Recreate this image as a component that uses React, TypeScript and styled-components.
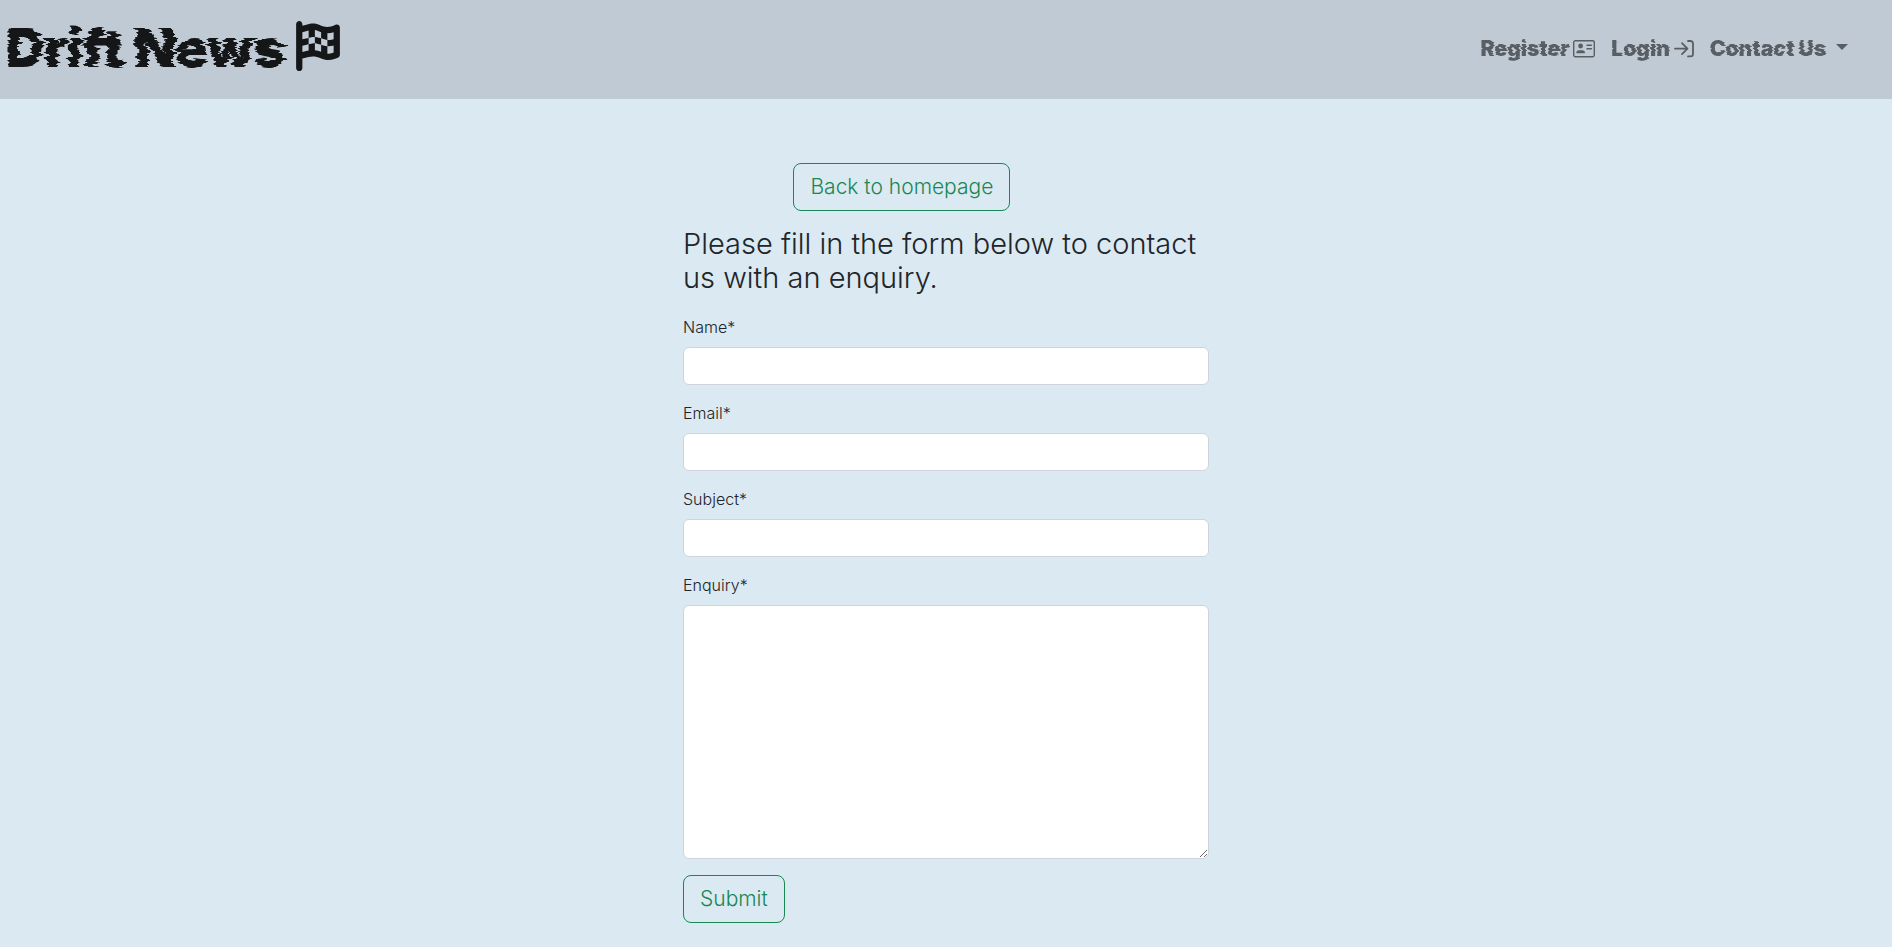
import React from 'react';
import styled, { createGlobalStyle } from 'styled-components';
import { FaFlagCheckered } from 'react-icons/fa6';

const GlobalStyle = createGlobalStyle`
  *, *::before, *::after { box-sizing: border-box; }
  body {
    margin: 0;
    background: #dbe9f2;
    color: #212529;
    font-family: Inter, "Open Sans", sans-serif;
    font-size: 16px;
    font-weight: 300;
    line-height: 24px;
  }
`;

const Header = styled.header`
  display: flex;
  align-items: center;
  justify-content: space-between;
  flex-wrap: wrap;
  min-height: 99px;
  padding: 0 44px 0 6px;
  background: #c0cad4;
`;

const Brand = styled.a`
  display: flex;
  align-items: center;
  gap: 8px;
  padding-bottom: 8px;
  color: #141618;
  font-size: 53px;
  font-weight: 900;
  line-height: 60px;
  text-decoration: none;
`;

const Glitch = styled.span<{ $size: 'large' | 'small' }>`
  padding-top: ${({ $size }) => ($size === 'large' ? '4px' : '0')};
  filter: url(#glitch-${({ $size }) => $size});
`;

const Nav = styled.nav`
  display: flex;
  align-items: center;
  gap: 16px;
  padding-bottom: 2px;
`;

const NavItem = styled.a`
  display: flex;
  align-items: center;
  gap: 4px;
  color: #585e63;
  font-size: 21px;
  font-weight: 900;
  line-height: 30px;
  text-decoration: none;
`;

const NavToggle = styled(NavItem).attrs({ as: 'button' })`
  gap: 10px;
  padding: 0;
  border: 0;
  background: none;
  font-family: inherit;
  cursor: pointer;
`;

const Caret = styled.span`
  margin-bottom: 4px;
  border-top: 6px solid;
  border-right: 6px solid transparent;
  border-left: 6px solid transparent;
`;

const Content = styled.main`
  width: 100%;
  max-width: 550px;
  margin: 0 auto;
  padding: 64px 12px 24px;
`;

const outlineButton = `
  display: inline-block;
  padding: 8px 16px;
  border: 1px solid #198754;
  border-radius: 8px;
  background: transparent;
  color: #198754;
  font-family: inherit;
  font-size: 21px;
  font-weight: 300;
  line-height: 30px;
  text-decoration: none;
  cursor: pointer;
`;

const BackLink = styled.a`
  ${outlineButton}
  margin-left: 21%;
`;

const SubmitButton = styled.button`
  ${outlineButton}
  align-self: flex-start;
`;

const Title = styled.h1`
  margin: 16px 0 20px;
  font-size: 29px;
  font-weight: 300;
  line-height: 34px;
`;

const Form = styled.form`
  display: flex;
  flex-direction: column;
  gap: 16px;
`;

const Field = styled.div`
  display: flex;
  flex-direction: column;
  gap: 8px;
`;

const Control = styled.input`
  width: 100%;
  height: 38px;
  padding: 6px 12px;
  border: 1px solid #ced4da;
  border-radius: 6px;
  background: #fff;
  color: inherit;
  font: inherit;
`;

const TextArea = styled(Control).attrs({ as: 'textarea' })`
  height: 254px;
  resize: vertical;
`;

const FilterDefs = styled.svg`
  position: absolute;
`;

const GlitchFilter = ({ id, rows, scale }: { id: string; rows: number; scale: number }) => (
  <filter id={id} x="-5%" y="0" width="110%" height="100%" colorInterpolationFilters="sRGB">
    <feTurbulence type="fractalNoise" baseFrequency={`0.02 ${rows}`} numOctaves={2} seed={4} />
    {/* Holding green at one half keeps the shift horizontal */}
    <feColorMatrix values="1 0 0 0 0  0 0 0 0 0.5  0 0 0 0 0  0 0 0 0 1" result="noise" />
    <feDisplacementMap in="SourceGraphic" in2="noise" scale={scale} xChannelSelector="R" yChannelSelector="G" />
  </filter>
);

const CardIcon = () => (
  <svg width="22" height="18" viewBox="0 0 22 18" fill="currentColor" aria-hidden="true">
    <rect x="0.7" y="0.7" width="20.6" height="16" rx="1.6" fill="none" stroke="currentColor" strokeWidth="1.4" />
    <circle cx="7.6" cy="6" r="2.4" />
    <path d="M3.3 13.2a2.9 2.9 0 0 1 2.9-3h2.9a2.9 2.9 0 0 1 2.9 3z" />
    <path d="M14 5.2h4.4M14 8.8h4.4" stroke="currentColor" strokeWidth="1.4" strokeLinecap="round" />
  </svg>
);

const LoginIcon = () => (
  <svg
    width="20"
    height="18"
    viewBox="0 0 20 18"
    fill="none"
    stroke="currentColor"
    strokeWidth="1.8"
    strokeLinecap="round"
    strokeLinejoin="round"
    aria-hidden="true"
  >
    <path d="M1 8.7h12M8 3.2l5.4 5.5L8 14.2M14 1h2.6A2.4 2.4 0 0 1 19 3.4v10.6a2.4 2.4 0 0 1-2.4 2.4H14" />
  </svg>
);

const fields = [
  { id: 'name', label: 'Name*', type: 'text' },
  { id: 'email', label: 'Email*', type: 'email' },
  { id: 'subject', label: 'Subject*', type: 'text' },
];

export default function App() {
  return (
    <>
      <GlobalStyle />
      <FilterDefs width="0" height="0" aria-hidden="true">
        <GlitchFilter id="glitch-large" rows={0.3} scale={16} />
        <GlitchFilter id="glitch-small" rows={0.5} scale={4} />
      </FilterDefs>
      <Header>
        <Brand href="#">
          <Glitch $size="large">Drift News</Glitch>
          <FaFlagCheckered size={50} aria-hidden="true" />
        </Brand>
        <Nav>
          <NavItem href="#register">
            <Glitch $size="small">Register</Glitch>
            <CardIcon />
          </NavItem>
          <NavItem href="#login">
            <Glitch $size="small">Login</Glitch>
            <LoginIcon />
          </NavItem>
          <NavToggle type="button">
            <Glitch $size="small">Contact Us</Glitch>
            <Caret />
          </NavToggle>
        </Nav>
      </Header>
      <Content>
        <BackLink href="#">Back to homepage</BackLink>
        <Title>Please fill in the form below to contact us with an enquiry.</Title>
        <Form>
          {fields.map(({ id, label, type }) => (
            <Field key={id}>
              <label htmlFor={id}>{label}</label>
              <Control id={id} name={id} type={type} required />
            </Field>
          ))}
          <Field>
            <label htmlFor="enquiry">Enquiry*</label>
            <TextArea id="enquiry" name="enquiry" required />
          </Field>
          <SubmitButton type="submit">Submit</SubmitButton>
        </Form>
      </Content>
    </>
  );
}
